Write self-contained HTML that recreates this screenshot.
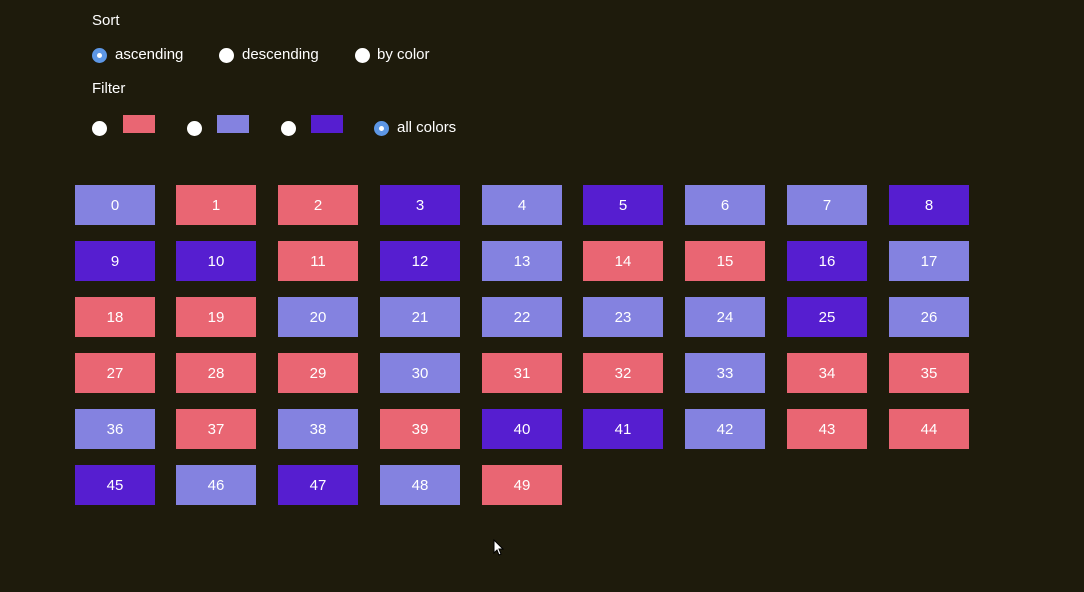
<!DOCTYPE html><html><head><style>
body{margin:0;width:1084px;height:592px;background:#1e1b0c;font-family:"Liberation Sans",sans-serif;color:#fff;position:relative;overflow:hidden}
.a{position:absolute;font-size:15px}
.r{position:absolute;width:15px;height:15px;border-radius:50%;background:#fff}
.r.on{background:#5d97e6}.r.on::after{content:"";position:absolute;left:5px;top:5px;width:5px;height:5px;border-radius:50%;background:#fff}
.b{position:absolute;width:80px;height:40px;line-height:42px;text-align:center;font-size:15px}
.L{background:#8482e0}.R{background:#e96673}.D{background:#561ed0}
</style></head><body>
<div class="a" style="left:92px;top:12px">Sort</div>
<div class="r on" style="left:92px;top:48px"></div><div class="a" style="left:115px;top:46px">ascending</div>
<div class="r" style="left:219px;top:48px"></div><div class="a" style="left:242px;top:46px">descending</div>
<div class="r" style="left:355px;top:48px"></div><div class="a" style="left:377px;top:46px">by color</div>
<div class="a" style="left:92px;top:80px">Filter</div>
<div class="r" style="left:92px;top:121px"></div><div class="R" style="position:absolute;left:123px;top:115px;width:32px;height:18px"></div>
<div class="r" style="left:187px;top:121px"></div><div class="L" style="position:absolute;left:217px;top:115px;width:32px;height:18px"></div>
<div class="r" style="left:281px;top:121px"></div><div class="D" style="position:absolute;left:311px;top:115px;width:32px;height:18px"></div>
<div class="r on" style="left:374px;top:121px"></div><div class="a" style="left:397px;top:119px">all colors</div>
<svg style="position:absolute;left:493px;top:539px" width="12" height="18" viewBox="0 0 12 18"><path d="M1 1 L1 14 L4 11 L6 16 L8 15 L6 10 L10 10 Z" fill="#fff" stroke="#000" stroke-width="1"/></svg>
<div id="g"></div>
<script>
var c="LRRDLDLLDDDRDLRRDLRRLLLLLDLRRRLRRLRRLRLRDDLRRDLDLR",h="",X=[75,176,278,380,482,583,685,787,889];
for(var i=0;i<50;i++){var x=X[i%9],y=185+Math.floor(i/9)*56;h+='<div class="b '+c[i]+'" style="left:'+x+'px;top:'+y+'px">'+i+'</div>';}
document.getElementById("g").innerHTML=h;
</script>
</body></html>
